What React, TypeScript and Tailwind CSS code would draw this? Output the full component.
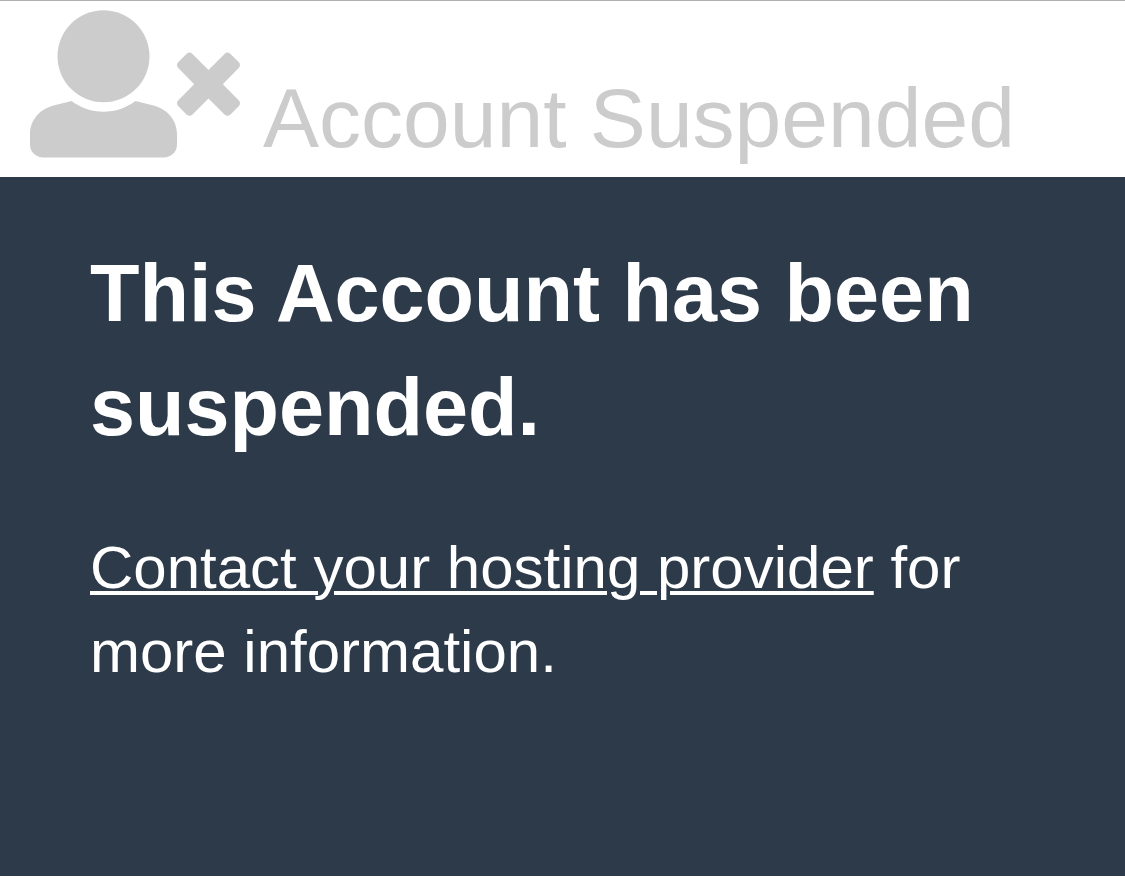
// App.tsx

function UserTimesIcon() {
  return (
    <svg
      viewBox="0 0 210 148"
      className="w-[210px] h-[148px] shrink-0"
      fill="currentColor"
      aria-hidden="true"
    >
      <circle cx="73.5" cy="46.3" r="46" />
      <path d="M41.5 91C51 98 61.500 101.700 73.500 101.700S96 98 105.500 91L123.500 95.500C137 98.900 147 110 147 124V134.500C147 142 141 147.500 133.500 147.500H13.500C6 147.500 0 142 0 134.500V124C0 110 10 98.900 23.500 95.500Z" />
      <path d="M178.500 59.900 194.500 43.900Q197.500 41.100 200.500 43.900L208.700 52.100Q211.300 55.100 208.700 58.100L192.800 74.200 208.700 90.200Q211.300 93.200 208.700 96.200L200.500 104.400Q197.500 107.200 194.500 104.400L178.500 88.500 162.500 104.400Q159.500 107.200 156.500 104.400L148.300 96.200Q145.700 93.200 148.300 90.200L164.200 74.200 148.300 58.100Q145.700 55.100 148.300 52.100L156.500 43.900Q159.500 41.100 162.500 43.900Z" />
    </svg>
  );
}

export default function App() {
  return (
    <div className="bg-white font-['Liberation_Sans',Arial,sans-serif]">
      <header className="flex items-end gap-[23px] border-t border-[#b0b0b0] px-[30px] pt-[9px] pb-[19px] text-[#cccccc]">
        <UserTimesIcon />
        <span className="text-[84px] leading-[80px]">Account Suspended</span>
      </header>

      <main className="bg-[#2d3a49] px-[90px] pt-[59px] pb-[182px] text-white">
        <h1 className="mb-[62px] text-[81px] leading-[114px] font-bold">
          This Account has been suspended.
        </h1>
        <p className="text-[60px] leading-[84px]">
          <a
            href="#contact"
            className="underline decoration-4 underline-offset-3"
          >
            Contact your hosting provider
          </a>{' '}
          for more information.
        </p>
      </main>
    </div>
  );
}
